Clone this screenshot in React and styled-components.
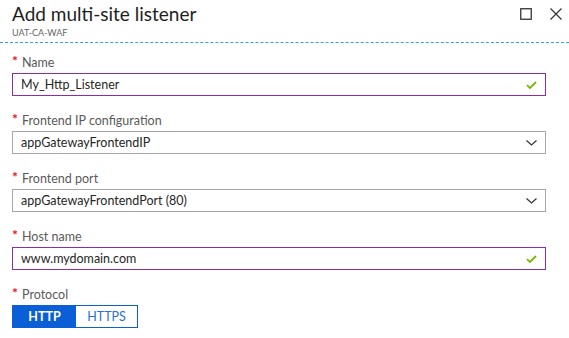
import React from "react";
import styled, { createGlobalStyle } from "styled-components";

const GlobalStyle = createGlobalStyle`
  html, body {
    margin: 0;
    padding: 0;
    background: #ffffff;
  }
  body {
    font-family: Lato, "Noto Sans", sans-serif;
    color: #333333;
  }
`;

const Blade = styled.div`
  width: 569px;
  height: 338px;
  background: #ffffff;
  overflow: hidden;
`;

const Header = styled.div`
  display: flex;
  justify-content: space-between;
  align-items: flex-start;
  height: 43px;
  padding: 0 7px 0 12px;
  box-sizing: border-box;
  border-bottom: 1px dashed #29a8e0;
`;

const TitleBlock = styled.div`
  display: flex;
  flex-direction: column;
`;

const Title = styled.h1`
  margin: 0;
  padding-top: 2px;
  font-size: 19px;
  font-weight: 400;
  line-height: 24px;
  color: #1e1e1e;
`;

const Subtitle = styled.div`
  font-size: 9px;
  line-height: 10px;
  color: #666666;
  margin-top: 2px;
`;

const HeaderIcons = styled.div`
  display: flex;
  gap: 18px;
  padding-top: 8px;
`;

const IconBtn = styled.svg`
  width: 12px;
  height: 12px;
  display: block;
`;

const Form = styled.div`
  padding: 11px 23px 0 12px;
  display: flex;
  flex-direction: column;
`;

const Field = styled.div`
  display: flex;
  flex-direction: column;
  margin-bottom: 16px;
`;

const Label = styled.div`
  display: flex;
  align-items: center;
  height: 16px;
  margin-bottom: 3px;
  font-size: 12.5px;
  color: #5a5a5a;
`;

const Star = styled.span`
  color: #e81123;
  font-size: 14px;
  font-weight: 700;
  width: 10px;
  position: relative;
  top: -2px;
`;

const Box = styled.div`
  display: flex;
  align-items: center;
  justify-content: space-between;
  height: 23px;
  box-sizing: border-box;
  border: 1px solid ${(p) => (p.$focus ? "#8a2da6" : "#a6a6a6")};
  padding: 0 8px 0 8px;
  font-size: 12.5px;
  color: #262626;
`;

const Toggle = styled.div`
  display: flex;
  width: 126px;
  height: 23px;
  box-sizing: border-box;
  border: 1px solid #0b5fd6;
`;

const Segment = styled.div`
  display: flex;
  align-items: center;
  justify-content: center;
  width: ${(p) => p.$w}px;
  font-size: 12.5px;
  font-weight: ${(p) => (p.$active ? 700 : 400)};
  background: ${(p) => (p.$active ? "#0b5fd6" : "#ffffff")};
  color: ${(p) => (p.$active ? "#ffffff" : "#2a6fd8")};
`;

const Check = () => (
  <svg width="11" height="8" viewBox="0 0 11 8">
    <path d="M1 4.2 L4 7 L10 1" fill="none" stroke="#7ab800" strokeWidth="1.8" />
  </svg>
);

const Chevron = () => (
  <svg width="11" height="6" viewBox="0 0 11 6">
    <path d="M0.5 0.5 L5.5 5 L10.5 0.5" fill="none" stroke="#333" strokeWidth="1.2" />
  </svg>
);

const TextField = ({ label, value }) => (
  <Field>
    <Label>
      <Star>*</Star>
      {label}
    </Label>
    <Box $focus>
      <span>{value}</span>
      <Check />
    </Box>
  </Field>
);

const SelectField = ({ label, value }) => (
  <Field>
    <Label>
      <Star>*</Star>
      {label}
    </Label>
    <Box>
      <span>{value}</span>
      <Chevron />
    </Box>
  </Field>
);

export default function App() {
  return (
    <>
      <GlobalStyle />
      <Blade>
        <Header>
          <TitleBlock>
            <Title>Add multi-site listener</Title>
            <Subtitle>UAT-CA-WAF</Subtitle>
          </TitleBlock>
          <HeaderIcons>
            <IconBtn viewBox="0 0 12 12">
              <rect x="0.75" y="0.75" width="10.5" height="10.5" fill="none" stroke="#333" strokeWidth="1.3" />
            </IconBtn>
            <IconBtn viewBox="0 0 12 12">
              <path d="M0.5 0.5 L11.5 11.5 M11.5 0.5 L0.5 11.5" stroke="#333" strokeWidth="1.2" />
            </IconBtn>
          </HeaderIcons>
        </Header>
        <Form>
          <TextField label="Name" value="My_Http_Listener" />
          <SelectField label="Frontend IP configuration" value="appGatewayFrontendIP" />
          <SelectField label="Frontend port" value="appGatewayFrontendPort (80)" />
          <TextField label="Host name" value="www.mydomain.com" />
          <Field>
            <Label>
              <Star>*</Star>
              Protocol
            </Label>
            <Toggle>
              <Segment $active $w={63}>HTTP</Segment>
              <Segment $w={61}>HTTPS</Segment>
            </Toggle>
          </Field>
        </Form>
      </Blade>
    </>
  );
}
